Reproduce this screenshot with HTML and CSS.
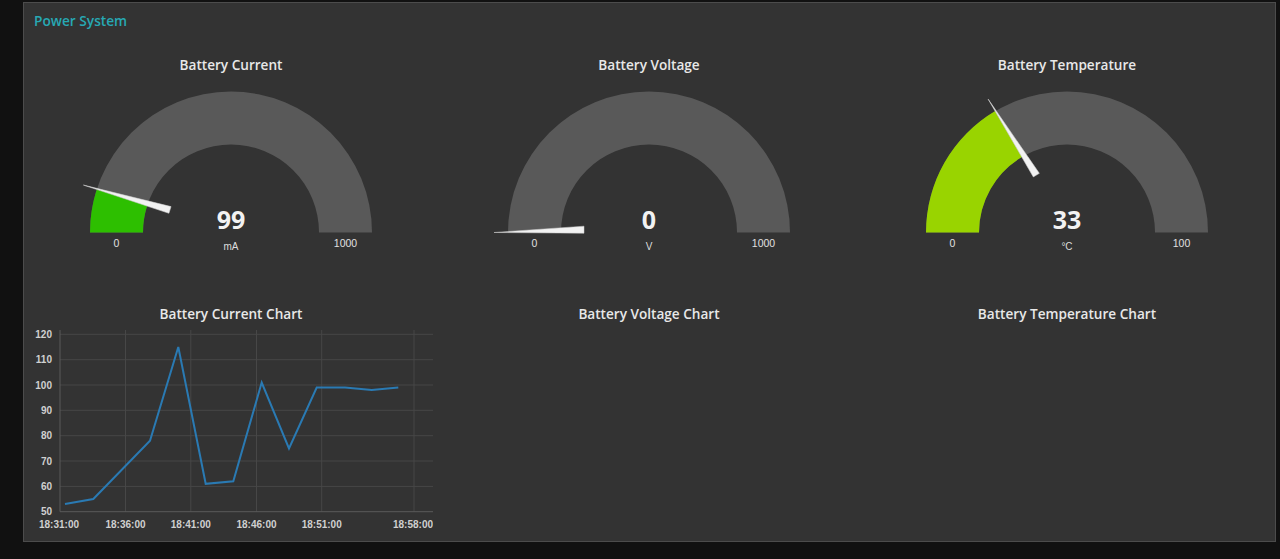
FILE: index.html
```html
<!DOCTYPE html>
<html>
<head>
<meta charset="utf-8">
<link rel="stylesheet" href="styles.css">
</head>
<body>
<div class="page">
  <section class="group">
    <header class="group-title">Power System</header>
    <div class="grid">
      <div class="widget">
        <div class="w-title">Battery Current</div>
        <svg class="gauge" viewBox="0 0 404 200" width="404" height="200">
          <path class="band" d="M 61 157.5 A 141 141 0 0 1 343 157.5 L 290 157.5 A 88 88 0 0 0 114 157.5 Z"/>
          <path fill="#2dbf00" d="M 61 157.5 A 141 141 0 0 1 67.8 114.35 L 118.2 130.6 A 88 88 0 0 0 114 157.5 Z"/>
          <polygon class="needle" points="47,157.5 137,158.2 137,151.2" transform="rotate(17.82 202 157.5)"/>
          <text class="g-value" x="202" y="154">99</text>
          <text class="g-unit" x="202" y="175">mA</text>
          <text class="g-lim" x="87.5" y="171.5">0</text>
          <text class="g-lim" x="316.5" y="171.5">1000</text>
        </svg>
      </div>
      <div class="widget">
        <div class="w-title">Battery Voltage</div>
        <svg class="gauge" viewBox="0 0 404 200" width="404" height="200">
          <path class="band" d="M 61 157.5 A 141 141 0 0 1 343 157.5 L 290 157.5 A 88 88 0 0 0 114 157.5 Z"/>
          <polygon class="needle" points="47,157.5 137,158.2 137,151.2" transform="rotate(0 202 157.5)"/>
          <text class="g-value" x="202" y="154">0</text>
          <text class="g-unit" x="202" y="175">V</text>
          <text class="g-lim" x="87.5" y="171.5">0</text>
          <text class="g-lim" x="316.5" y="171.5">1000</text>
        </svg>
      </div>
      <div class="widget">
        <div class="w-title">Battery Temperature</div>
        <svg class="gauge" viewBox="0 0 404 200" width="404" height="200">
          <path class="band" d="M 61 157.5 A 141 141 0 0 1 343 157.5 L 290 157.5 A 88 88 0 0 0 114 157.5 Z"/>
          <path fill="#99d400" d="M 61 157.5 A 141 141 0 0 1 130.2 36.1 L 157.2 81.8 A 88 88 0 0 0 114 157.5 Z"/>
          <polygon class="needle" points="47,157.5 137,158.2 137,151.2" transform="rotate(59.4 202 157.5)"/>
          <text class="g-value" x="202" y="154">33</text>
          <text class="g-unit" x="202" y="175">°C</text>
          <text class="g-lim" x="87.5" y="171.5">0</text>
          <text class="g-lim" x="316.5" y="171.5">100</text>
        </svg>
      </div>

      <div class="widget chart-w">
        <div class="w-title">Battery Current Chart</div>
        <svg class="chart" viewBox="0 0 404 210" width="404" height="210">
          <g class="hgrid">
            <line x1="31" x2="405" y1="10.3" y2="10.3"/>
            <line x1="31" x2="405" y1="35.7" y2="35.7"/>
            <line x1="31" x2="405" y1="61" y2="61"/>
            <line x1="31" x2="405" y1="86.3" y2="86.3"/>
            <line x1="31" x2="405" y1="111.7" y2="111.7"/>
            <line x1="31" x2="405" y1="137" y2="137"/>
            <line x1="31" x2="405" y1="162.4" y2="162.4"/>
          </g>
          <g class="vgrid">
            <line x1="96.5" x2="96.5" y1="6" y2="187.7"/>
            <line x1="161.8" x2="161.8" y1="6" y2="187.7"/>
            <line x1="227.5" x2="227.5" y1="6" y2="187.7"/>
            <line x1="292.7" x2="292.7" y1="6" y2="187.7"/>
            <line x1="385" x2="385" y1="6" y2="187.7"/>
          </g>
          <line class="axis" x1="31" x2="31" y1="6" y2="187.7"/>
          <line class="axis" x1="31" x2="405" y1="187.7" y2="187.7"/>
          <g class="ylab">
            <text x="23" y="14">120</text>
            <text x="23" y="39.4">110</text>
            <text x="23" y="64.7">100</text>
            <text x="23" y="90">90</text>
            <text x="23" y="115.4">80</text>
            <text x="23" y="140.7">70</text>
            <text x="23" y="166.1">60</text>
            <text x="23" y="191.4">50</text>
          </g>
          <g class="xlab">
            <text x="30" y="204">18:31:00</text>
            <text x="96.5" y="204">18:36:00</text>
            <text x="161.8" y="204">18:41:00</text>
            <text x="227.5" y="204">18:46:00</text>
            <text x="292.7" y="204">18:51:00</text>
            <text x="384" y="204">18:58:00</text>
          </g>
          <polyline class="series" points="36,180.1 64.3,175 121,116.7 149.3,23 176.7,159.8 204.3,157.3 232.7,58.5 260,124.4 287.7,63.5 316,63.5 342.7,66.1 369.3,63.5"/>
        </svg>
      </div>
      <div class="widget chart-w">
        <div class="w-title">Battery Voltage Chart</div>
      </div>
      <div class="widget chart-w">
        <div class="w-title">Battery Temperature Chart</div>
      </div>
    </div>
  </section>
</div>
</body>
</html>
```
FILE: styles.css
```css
html, body {
  margin: 0;
  padding: 0;
  background: #111111;
  height: 100%;
}
body {
  font-family: "Open Sans", "Noto Sans", sans-serif;
  color: #eeeeee;
  overflow: hidden;
}
.page {
  padding: 2px 4px 0 23px;
}
.group {
  box-sizing: border-box;
  width: 1253px;
  height: 540px;
  background: #333333;
  border: 1px solid #4c4c4c;
}
.group-title {
  padding: 8px 10px 0;
  height: 20px;
  line-height: 20px;
  font-size: 13.7px;
  font-weight: 600;
  color: #27a9b4;
}
.grid {
  display: grid;
  grid-template-columns: repeat(3, 404px);
  column-gap: 14px;
  row-gap: 29px;
  padding-left: 5px;
  margin-top: 24px;
}
.widget {
  display: flex;
  flex-direction: column;
  align-items: center;
}
.w-title {
  height: 20px;
  line-height: 20px;
  font-size: 13.6px;
  font-weight: 600;
  color: #e8e8e8;
  text-align: center;
}
.gauge, .chart {
  display: block;
}
.band {
  fill: #595959;
}
.needle {
  fill: #f2f2f2;
  stroke: #cfcfcf;
  stroke-width: 0.5;
}
.g-value {
  font-family: "Open Sans", "Noto Sans", sans-serif;
  font-weight: 700;
  font-size: 25px;
  fill: #f2f2f2;
  text-anchor: middle;
}
.g-unit {
  font-family: "Liberation Sans", Arial, sans-serif;
  font-size: 10px;
  fill: #dddddd;
  text-anchor: middle;
}
.g-lim {
  font-family: "Liberation Sans", Arial, sans-serif;
  font-size: 10.5px;
  fill: #e0e0e0;
  text-anchor: middle;
}
.hgrid line, .vgrid line {
  stroke: #474747;
  stroke-width: 1;
}
.axis {
  stroke: #5a5a5a;
  stroke-width: 1;
}
.ylab text {
  font-family: "Liberation Sans", Arial, sans-serif;
  font-size: 10px;
  font-weight: 700;
  fill: #d0d0d0;
  text-anchor: end;
}
.xlab text {
  font-family: "Liberation Sans", Arial, sans-serif;
  font-size: 10px;
  font-weight: 700;
  fill: #d0d0d0;
  text-anchor: middle;
}
.series {
  fill: none;
  stroke: #2a7ab3;
  stroke-width: 2;
  stroke-linejoin: miter;
}
```
